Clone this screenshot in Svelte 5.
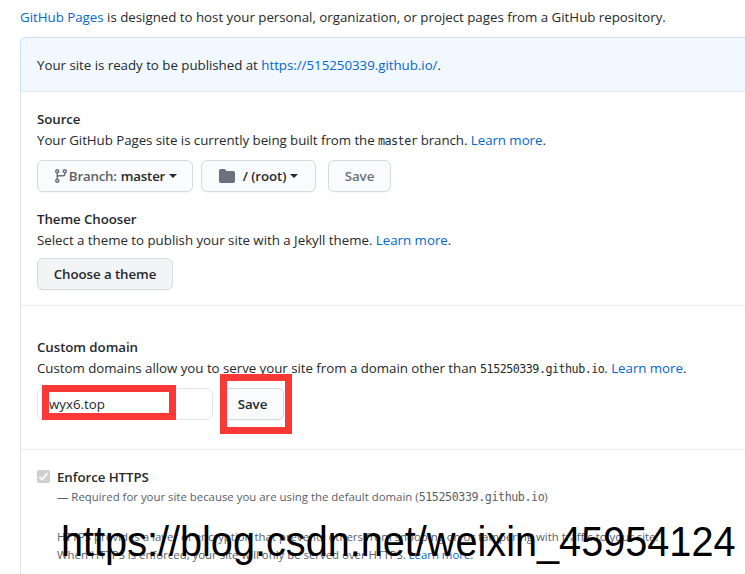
<script>
  const domain = '515250339.github.io';
  let customDomain = $state('wyx6.top');
</script>

<main>
  <p class="intro"><a href="#pages">GitHub Pages</a> is designed to host your personal, organization, or project pages from a GitHub repository.</p>

  <div class="box">
    <div class="flash"><p class="ready">Your site is ready to be published at <a href="#site">https://{domain}/</a>.</p></div>

    <section class="source">
      <h2 class="h-source">Source</h2>
      <p class="p-source">Your GitHub Pages site is currently being built from the <code>master</code> branch. <a href="#more">Learn more</a>.</p>
      <div class="row">
        <button class="branch">
          <svg width="16" height="16" viewBox="0 0 16 16"><path fill-rule="evenodd" d="M11.75 2.5a.75.75 0 100 1.5.75.75 0 000-1.5zm-2.25.75a2.25 2.25 0 113 2.122V6A2.5 2.5 0 0110 8.500H6a1 1 0 00-1 1v1.128a2.251 2.251 0 11-1.500 0V5.372a2.250 2.250 0 111.500 0v1.836A2.492 2.492 0 016 7h4a1 1 0 001-1v-.628A2.250 2.250 0 019.500 3.250zM4.250 12a.75.75 0 100 1.500.75.75 0 000-1.500zM3.500 3.250a.75.75 0 111.500 0 .75.75 0 01-1.500 0z" /></svg>
          <span class="muted">Branch:</span><span class="value">master</span><i class="caret"></i>
        </button>
        <button class="root">
          <svg width="16" height="16" viewBox="0 0 16 16"><path d="M1.750 1A1.750 1.750 0 000 2.750v10.500C0 14.216.784 15 1.750 15h12.500A1.750 1.750 0 0016 13.250v-8.500A1.750 1.750 0 0014.250 3h-6.500a.25.25 0 01-.2-.1l-.9-1.200c-.33-.44-.85-.7-1.400-.7h-3.500z" /></svg>
          <span class="value">/ (root)</span><i class="caret"></i>
        </button>
        <button class="save disabled">Save</button>
      </div>

      <h2 class="h-theme">Theme Chooser</h2>
      <p class="p-theme">Select a theme to publish your site with a Jekyll theme. <a href="#more">Learn more</a>.</p>
      <button class="choose">Choose a theme</button>
    </section>

    <section class="custom">
      <h2 class="h-custom">Custom domain</h2>
      <p class="p-custom">Custom domains allow you to serve your site from a domain other than <code>{domain}</code>. <a href="#more">Learn more</a>.</p>
      <div class="row fields">
        <div class="field"><input bind:value={customDomain} aria-label="Custom domain" /><div class="mark mark-input"></div></div>
        <div class="field"><button class="save">Save</button><div class="mark mark-save"></div></div>
      </div>
    </section>

    <section class="https">
      <span class="check"><svg width="13" height="13" viewBox="0 0 13 13"><path d="M2.300 6.900 5 9.500 10.600 3.200" fill="none" stroke="#f7f7f7" stroke-width="2" /></svg></span>
      <div>
        <h2 class="h-https">Enforce HTTPS</h2>
        <p class="note required">— Required for your site because you are using the default domain (<code>{domain}</code>)</p>
        <p class="note first">HTTPS provides a layer of encryption that prevents others from snooping on or tampering with traffic to your site.</p>
        <p class="note second">When HTTPS is enforced, your site will only be served over HTTPS. <a href="#more">Learn more</a>.</p>
      </div>
    </section>
  </div>
  <div class="watermark">https://blog.csdn.net/weixin_45954124</div>
  <div class="shade"></div>
</main>

<style>
  :global(body) { background: #fff; overflow: hidden; }
  main {
    position: relative;
    box-sizing: border-box;
    width: 745px;
    height: 574px;
    padding: 7px 0 0 20px;
    overflow: hidden;
    color: #24292e;
    font: 13.3px/21px "Open Sans", "Noto Sans", sans-serif;
  }
  p, h2 { margin: 0; white-space: nowrap; line-height: 21px; }
  h2 { font-size: 13.3px; font-weight: 600; letter-spacing: -0.07px; }
  a { color: #0366d6; text-decoration: none; }
  code { font: 11.7px/1 "DejaVu Sans Mono", monospace; letter-spacing: -0.42px; }
  .intro { letter-spacing: -0.01px; }
  .ready { letter-spacing: -0.02px; }
  .p-source { letter-spacing: -0.05px; }
  .p-theme { letter-spacing: -0.015px; }
  .p-custom { letter-spacing: -0.03px; }
  .p-source code, .p-custom code { letter-spacing: -0.5px; }
  .box {
    box-sizing: border-box;
    width: 900px;
    height: 620px;
    margin-top: 9px;
    border: 1px solid #e1e4e8;
    border-radius: 6px;
  }
  .flash {
    box-sizing: border-box;
    height: 55px;
    margin: -1px -1px 0;
    padding: 17px 16px 0;
    background: #f1f8ff;
    border: 1px solid #c8e1ff;
    border-bottom-color: #e1e8f0;
    border-radius: 6px 6px 0 0;
  }
  section { box-sizing: border-box; padding: 0 16px; border-bottom: 1px solid #eaecef; }
  .source { height: 214px; padding-top: 17px; }
  .custom { height: 144px; padding-top: 31px; }
  .https { display: flex; gap: 7px; padding-top: 17px; border: 0; }
  .row { display: flex; margin: 9px 0 17px; }
  button {
    display: flex;
    align-items: center;
    justify-content: center;
    box-sizing: border-box;
    height: 32px;
    padding: 0;
    color: #24292e;
    background: #fafbfc;
    border: 1px solid #d7dadc;
    border-radius: 6px;
    box-shadow: 0 1px 0 rgba(27, 31, 35, 0.04);
    font: 600 13.3px/20px "Open Sans", "Noto Sans", sans-serif;
    letter-spacing: -0.07px;
    white-space: nowrap;
  }
  button svg { fill: #6a737d; flex: none; }
  .branch { width: 156px; margin-right: 8px; letter-spacing: -0.2px; }
  .root { width: 115px; margin-right: 12px; }
  .root svg { margin-right: 8px; }
  .save { width: 63px; }
  .disabled { color: #6a737d; }
  .muted { color: #586069; margin-right: 4px; }
  .caret { margin-left: 4px; border: 4px solid transparent; border-top-color: #24292e; border-bottom: 0; }
  .choose { width: 136px; margin-top: 7px; background: #f3f4f6; }
  .fields { margin: 9px 0 0; gap: 8px; }
  .field { position: relative; }
  input {
    display: block;
    box-sizing: border-box;
    width: 176px;
    height: 32px;
    padding: 0 11px;
    color: #24292e;
    background: #fff;
    border: 1px solid #e1e4e8;
    border-radius: 6px;
    font: 13.3px/20px "Open Sans", "Noto Sans", sans-serif;
  }
  .mark { position: absolute; box-sizing: border-box; border: 7px solid #fb3838; }
  .mark-input { left: 5px; top: -3px; width: 134px; height: 35px; }
  .mark-save { left: -1px; top: -14px; width: 72px; height: 60px; }
  .check { width: 13px; height: 13px; margin-top: 3px; background: #cfcfcf; border-radius: 2px; }
  .check svg { display: block; }
  .note { color: #586069; font-size: 11.4px; line-height: 18px; }
  .required { margin-bottom: 22px; }
  .watermark {
    position: absolute;
    left: 61px;
    top: 518px;
    color: #000;
    font: 42px/48px "Liberation Sans", Arial, sans-serif;
    white-space: nowrap;
    transform: scaleX(0.944);
    transform-origin: 0 0;
  }
  .shade { position: absolute; left: 0; bottom: -2px; width: 36px; height: 1px; box-shadow: 0 0 5px rgba(0, 0, 0, 0.2); }
</style>
